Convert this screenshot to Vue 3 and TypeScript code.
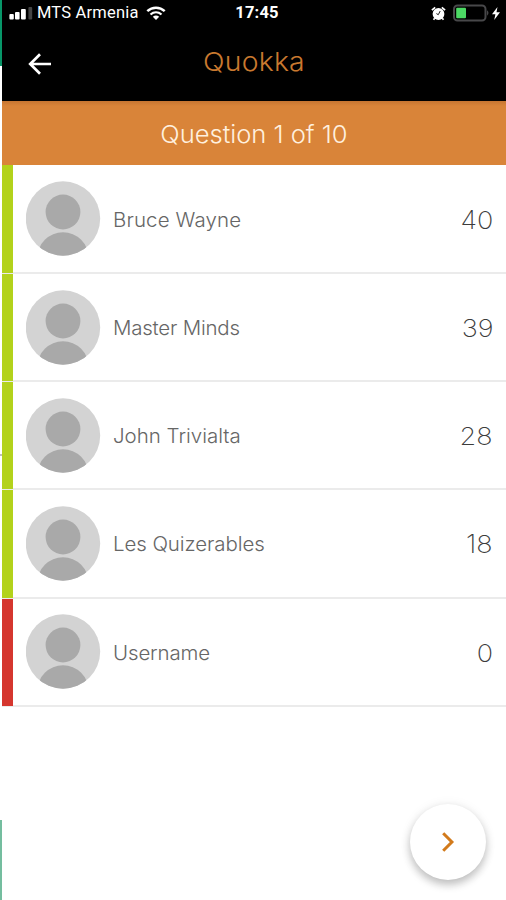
<script setup lang="ts">
interface Player {
  name: string
  score: number
  spacing: string
  answered: boolean
}

const players: Player[] = [
  { name: 'Bruce Wayne', score: 40, spacing: '0.12px', answered: true },
  { name: 'Master Minds', score: 39, spacing: '-0.2px', answered: true },
  { name: 'John Trivialta', score: 28, spacing: '0px', answered: true },
  { name: 'Les Quizerables', score: 18, spacing: '-0.08px', answered: true },
  { name: 'Username', score: 0, spacing: '-0.12px', answered: false },
]
</script>

<template>
  <div class="screen">
    <div class="edge">
      <i class="edge-top"></i>
      <i class="edge-tick"></i>
      <i class="edge-bottom"></i>
    </div>
    <main class="phone">
      <header class="header">
        <div class="status">
          <div class="carrier">
            <svg class="signal" width="24" height="14" viewBox="0 0 24 14">
              <rect x="0.4" y="8" width="4.4" height="5.4" rx="1" fill="#fff" />
              <rect x="6" y="6" width="4.6" height="7.4" rx="1" fill="#fff" />
              <rect x="12" y="3" width="4.8" height="10.4" rx="1" fill="#fff" />
              <rect x="19.4" y="1" width="3.8" height="12.4" rx="1" fill="#444" />
            </svg>
            <span class="carrier-name">MTS Armenia</span>
            <svg class="wifi" width="20" height="15" viewBox="0 0 20 15" fill="none" stroke="#fff">
              <path d="M1.3 5.2C6.2.6 13.8.6 18.7 5.2" stroke-width="2.5" />
              <path d="M4.5 8.5C7.8 5.6 12.2 5.6 15.5 8.5" stroke-width="2.2" />
              <path d="M10 14 6.8 10.8Q10 8.4 13.2 10.8Z" fill="#fff" stroke="none" />
            </svg>
          </div>
          <span class="time">17:45</span>
          <div class="power">
            <svg class="alarm" width="15" height="15" viewBox="0 0 15 15">
              <circle cx="7.5" cy="8" r="5.9" fill="#fff" />
              <path d="M.9 4.2 4.2 1.3M10.8 1.3l3.3 2.9M3.7 12.3l-1.2 1.5M11.3 12.3l1.2 1.5" stroke="#fff" stroke-width="1.7" />
              <path d="M5.4 7.6 7.3 8.7 9.2 5" fill="none" stroke="#222" stroke-width="1" />
            </svg>
            <svg class="battery" width="37" height="18" viewBox="0 0 37 18">
              <rect x="1" y="1.5" width="31.5" height="15" rx="3.5" fill="none" stroke="#48484a" stroke-width="2" />
              <rect x="3.2" y="3.8" width="9.8" height="10.4" rx="1" fill="#4cd964" />
              <path d="M34 6.3q3 2.7 0 5.4z" fill="#48484a" />
            </svg>
            <svg class="bolt" width="8" height="13" viewBox="0 0 8 13">
              <path d="M5.5 0 0 7.2h3.4L2.2 13 8 5.3H4.5z" fill="#fff" />
            </svg>
          </div>
        </div>
        <nav class="nav">
          <svg class="back" width="24" height="22" viewBox="0 0 24 22" fill="none" stroke="#fff" stroke-width="2.7">
            <path d="M23 11H2.5M12 1.2 2.2 11 12 20.8" />
          </svg>
          <h1 class="title">Quokka</h1>
        </nav>
      </header>
      <section class="banner"><span class="banner-text">Question 1 of 10</span></section>
      <ul class="players">
        <li v-for="p in players" :key="p.name" class="player" :class="{ pending: !p.answered }">
          <i class="stripe"></i>
          <div class="row">
            <svg class="avatar" width="75" height="75" viewBox="0 0 75 75">
              <defs>
                <clipPath id="avatar-clip"><circle cx="37" cy="37.5" r="37.2" /></clipPath>
              </defs>
              <g clip-path="url(#avatar-clip)">
                <rect width="75" height="75" fill="#d3d3d3" />
                <circle cx="37" cy="31" r="17.4" fill="#a9a9a9" />
                <circle cx="37" cy="77" r="25.7" fill="#a9a9a9" />
              </g>
            </svg>
            <span class="name" :style="{ letterSpacing: p.spacing }">{{ p.name }}</span>
            <span class="score">{{ p.score }}</span>
          </div>
        </li>
      </ul>
      <footer class="footer">
        <button class="next" aria-label="Next">
          <svg width="14" height="20" viewBox="0 0 14 20" fill="none" stroke="#d27a1b" stroke-width="3">
            <path d="M2.2 1.3 10.9 10 2.2 18.7" />
          </svg>
        </button>
      </footer>
    </main>
  </div>
</template>

<style>
body {
  margin: 0;
  background: #fff;
}
</style>

<style scoped>
.screen {
  display: flex;
  width: 506px;
  height: 900px;
  overflow: hidden;
  background: #fff;
  font-family: Inter, "Liberation Sans", sans-serif;
}
.edge {
  display: flex;
  flex-direction: column;
  width: 2px;
  height: 900px;
}
.edge-top {
  height: 66px;
  background: #079668;
}
.edge-tick {
  height: 2px;
  margin-top: 388px;
  background: #bbb;
}
.edge-bottom {
  height: 80px;
  margin-top: auto;
  background: #74bd9f;
}
.phone {
  display: flex;
  flex-direction: column;
  width: 504px;
}
.header {
  height: 101px;
  background: #000;
  color: #fff;
}
.status {
  display: grid;
  grid-template-columns: 1fr auto 1fr;
  align-items: center;
  height: 26px;
  padding: 0 5px 0 7px;
}
.carrier,
.power {
  display: flex;
  align-items: center;
}
.carrier-name {
  margin-left: 4px;
  font: 400 16.5px/20px Roboto, sans-serif;
  letter-spacing: 0.2px;
  white-space: nowrap;
}
.signal {
  margin-top: 0;
}
.wifi {
  margin-left: 7px;
}
.time {
  padding-left: 4px;
  font: 700 16.5px/20px Roboto, sans-serif;
  letter-spacing: 0.2px;
}
.power {
  justify-content: flex-end;
  padding-right: 1px;
}
.alarm {
  margin-right: 1px;
}
.battery {
  margin-left: 6px;
}
.bolt {
  margin-left: 2px;
}
.nav {
  display: grid;
  grid-template-columns: 78px 1fr 78px;
  align-items: center;
  height: 75px;
}
.back {
  margin-left: 26px;
}
.title {
  margin: -4px 0 0;
  color: #c9792f;
  font-size: 26px;
  font-weight: 300;
  letter-spacing: 0.2px;
  text-align: center;
  transform: scaleX(1.09);
}
.banner {
  display: flex;
  align-items: center;
  justify-content: center;
  height: 64px;
  background: linear-gradient(#c67531, #d98439 5px);
  color: #fff0df;
}
.banner-text {
  margin-top: 2px;
  font-size: 24px;
  font-weight: 300;
  letter-spacing: -0.02px;
  transform: scaleX(1.065);
}
.players {
  margin: 0;
  padding: 0;
  list-style: none;
}
.player {
  display: flex;
  box-sizing: border-box;
  height: 108.2px;
  border-bottom: 2px solid #ebebeb;
}
.player:first-child {
  height: 109px;
}
.stripe {
  width: 11px;
  margin-bottom: -1px;
  background: #b3d21b;
}
.pending .stripe {
  background: #d5362e;
}
.row {
  display: flex;
  flex: 1;
  align-items: center;
  padding: 0 13px;
}
.name {
  margin: 2px 0 0 12px;
  color: #666;
  font-size: 19.5px;
  font-weight: 300;
  transform: scaleX(1.05);
  transform-origin: left;
}
.score {
  margin: 2px 0 0 auto;
  color: #3c3c3c;
  font-size: 25px;
  font-weight: 200;
  transform: scaleX(1.08);
  transform-origin: right;
}
.footer {
  display: flex;
  justify-content: flex-end;
  margin-top: auto;
  padding: 0 20.5px 20px 0;
}
.next {
  display: flex;
  align-items: center;
  justify-content: center;
  width: 76px;
  height: 76px;
  padding: 0;
  border: 0;
  border-radius: 50%;
  background: #fff;
  box-shadow: 0 5px 8px rgba(0, 0, 0, 0.22), 0 1px 12px rgba(0, 0, 0, 0.08);
}
</style>
